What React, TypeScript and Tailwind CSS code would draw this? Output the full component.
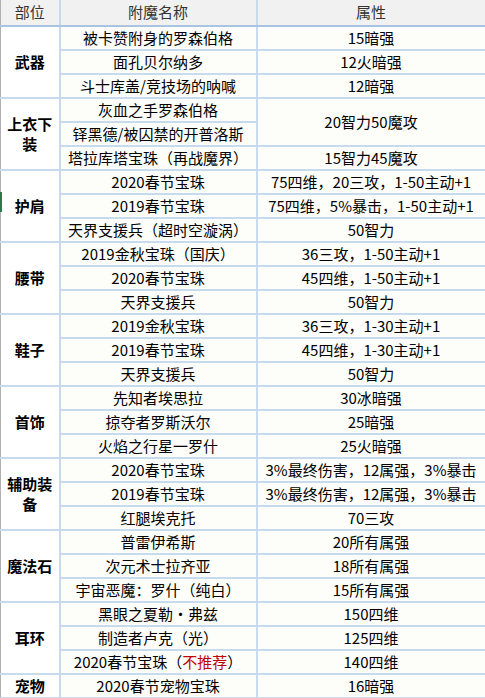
import React from "react";

type Row = { name: React.ReactNode; attr?: string; span?: number };
type Group = { part: string; rows: Row[] };

const groups: Group[] = [
  {
    part: "武器",
    rows: [
      { name: "被卡赞附身的罗森伯格", attr: "15暗强" },
      { name: "面孔贝尔纳多", attr: "12火暗强" },
      { name: "斗士库盖/竞技场的呐喊", attr: "12暗强" },
    ],
  },
  {
    part: "上衣下装",
    rows: [
      { name: "灰血之手罗森伯格", attr: "20智力50魔攻", span: 2 },
      { name: "铎黑德/被囚禁的开普洛斯" },
      { name: "塔拉库塔宝珠（再战魔界）", attr: "15智力45魔攻" },
    ],
  },
  {
    part: "护肩",
    rows: [
      { name: "2020春节宝珠", attr: "75四维，20三攻，1-50主动+1" },
      { name: "2019春节宝珠", attr: "75四维，5%暴击，1-50主动+1" },
      { name: "天界支援兵（超时空漩涡）", attr: "50智力" },
    ],
  },
  {
    part: "腰带",
    rows: [
      { name: "2019金秋宝珠（国庆）", attr: "36三攻，1-50主动+1" },
      { name: "2020春节宝珠", attr: "45四维，1-50主动+1" },
      { name: "天界支援兵", attr: "50智力" },
    ],
  },
  {
    part: "鞋子",
    rows: [
      { name: "2019金秋宝珠", attr: "36三攻，1-30主动+1" },
      { name: "2019春节宝珠", attr: "45四维，1-30主动+1" },
      { name: "天界支援兵", attr: "50智力" },
    ],
  },
  {
    part: "首饰",
    rows: [
      { name: "先知者埃思拉", attr: "30冰暗强" },
      { name: "掠夺者罗斯沃尔", attr: "25暗强" },
      { name: "火焰之行星一罗什", attr: "25火暗强" },
    ],
  },
  {
    part: "辅助装备",
    rows: [
      { name: "2020春节宝珠", attr: "3%最终伤害，12属强，3%暴击" },
      { name: "2019春节宝珠", attr: "3%最终伤害，12属强，3%暴击" },
      { name: "红腿埃克托", attr: "70三攻" },
    ],
  },
  {
    part: "魔法石",
    rows: [
      { name: "普雷伊希斯", attr: "20所有属强" },
      { name: "次元术士拉齐亚", attr: "18所有属强" },
      { name: "宇宙恶魔：罗什（纯白）", attr: "15所有属强" },
    ],
  },
  {
    part: "耳环",
    rows: [
      { name: "黑眼之夏勒·弗兹", attr: "150四维" },
      { name: "制造者卢克（光）", attr: "125四维" },
      {
        name: (
          <>
            2020春节宝珠（<span className="text-[#c00000]">不推荐</span>）
          </>
        ),
        attr: "140四维",
      },
    ],
  },
  {
    part: "宠物",
    rows: [{ name: "2020春节宠物宝珠", attr: "16暗强" }],
  },
];

const base = "border-2 border-[#c8daee] text-center align-middle p-0 leading-[20px] h-[24px]";
const cell = `${base} whitespace-nowrap`;

export default function App() {
  return (
    <div
      className="relative w-[485px] h-[698px] bg-white overflow-hidden text-[15px] leading-[20px] text-black"
      style={{ fontFamily: '"Noto Sans CJK SC", "Liberation Sans", sans-serif' }}
    >
      <table className="table-fixed border-collapse w-[485px] -mt-px">
        <colgroup>
          <col className="w-[59px]" />
          <col className="w-[197px]" />
          <col className="w-[229px]" />
        </colgroup>
        <thead>
          <tr className="bg-[#f1f1f1] text-[#333]">
            <th className={`${cell} h-[27px] font-normal border-t-0 border-b-[#a9c4e1] border-l border-l-[#b0b0b0]`}>部位</th>
            <th className={`${cell} h-[27px] font-normal border-t-0 border-b-[#a9c4e1]`}>附魔名称</th>
            <th className={`${cell} h-[27px] font-normal border-t-0 border-b-[#a9c4e1]`}>属性</th>
          </tr>
        </thead>
        <tbody>
          {groups.map((g) =>
            g.rows.map((r, i) => (
              <tr key={g.part + i}>
                {i === 0 && (
                  <td
                    rowSpan={g.rows.length}
                    className={`${base} bg-white font-bold border-l border-l-[#b0b0b0]`}
                  >
                    <div className="w-[48px] mx-auto whitespace-normal break-all">{g.part}</div>
                  </td>
                )}
                <td className={`${cell} bg-[#fdfdfa]`}>{r.name}</td>
                {r.attr !== undefined && (
                  <td rowSpan={r.span ?? 1} className={`${cell} bg-[#fdfdfa]`}>
                    {r.attr}
                  </td>
                )}
              </tr>
            ))
          )}
        </tbody>
      </table>
      <div className="absolute left-0 top-[192px] w-[2px] h-[20px] bg-[#2b7a4b]" />
    </div>
  );
}
